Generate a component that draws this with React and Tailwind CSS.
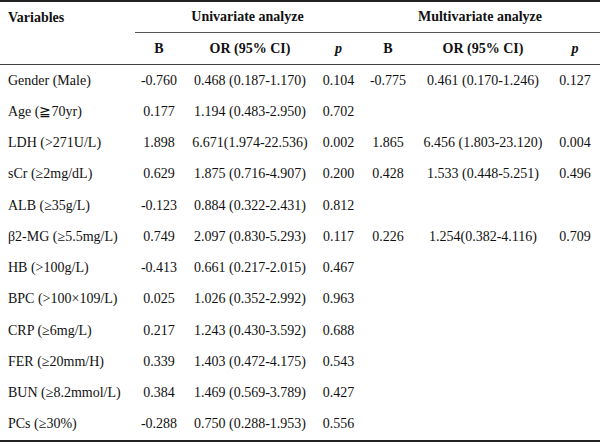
const rows = [
  ['Gender (Male)', '-0.760', '0.468 (0.187-1.170)', '0.104', '-0.775', '0.461 (0.170-1.246)', '0.127'],
  ['Age (\u226770yr)', '0.177', '1.194 (0.483-2.950)', '0.702', '', '', ''],
  ['LDH (>271U/L)', '1.898', '6.671(1.974-22.536)', '0.002', '1.865', '6.456 (1.803-23.120)', '0.004'],
  ['sCr (\u22652mg/dL)', '0.629', '1.875 (0.716-4.907)', '0.200', '0.428', '1.533 (0.448-5.251)', '0.496'],
  ['ALB (\u226535g/L)', '-0.123', '0.884 (0.322-2.431)', '0.812', '', '', ''],
  ['\u03b22-MG (\u22655.5mg/L)', '0.749', '2.097 (0.830-5.293)', '0.117', '0.226', '1.254(0.382-4.116)', '0.709'],
  ['HB (>100g/L)', '-0.413', '0.661 (0.217-2.015)', '0.467', '', '', ''],
  ['BPC (>100\u00d7109/L)', '0.025', '1.026 (0.352-2.992)', '0.963', '', '', ''],
  ['CRP (\u22656mg/L)', '0.217', '1.243 (0.430-3.592)', '0.688', '', '', ''],
  ['FER (\u226520mm/H)', '0.339', '1.403 (0.472-4.175)', '0.543', '', '', ''],
  ['BUN (\u22658.2mmol/L)', '0.384', '1.469 (0.569-3.789)', '0.427', '', '', ''],
  ['PCs (\u226530%)', '-0.288', '0.750 (0.288-1.953)', '0.556', '', '', ''],
];

const cols = 'grid grid-cols-[135px_48px_134px_43px_56px_134px_50px]';

export default function App() {
  return (
    <div className="h-[442px] w-[600px] bg-white font-['Liberation_Serif',serif] text-[14px] leading-none text-[#111]">
      <div className="border-t-2 border-[#222]">
        <div className={`${cols} h-[31px]`}>
          <div className="flex items-center pl-2 font-bold">Variables</div>
          <div className="col-span-3 flex items-center justify-center border-b border-[#555] font-bold">
            Univariate analyze
          </div>
          <div className="col-span-3 flex items-center justify-center border-b border-[#555] font-bold">
            Multivariate analyze
          </div>
        </div>
        <div className={`${cols} h-[32px] border-b border-[#444] font-bold`}>
          <div />
          <div className="flex items-center justify-center">B</div>
          <div className="flex items-center justify-center">OR (95% CI)</div>
          <div className="flex items-center justify-center italic">p</div>
          <div className="flex items-center justify-center">B</div>
          <div className="flex items-center justify-center">OR (95% CI)</div>
          <div className="flex items-center justify-center italic">p</div>
        </div>
        <div className="border-b-2 border-[#222]">
          {rows.map((r) => (
            <div key={r[0]} className={`${cols} h-[31.25px]`}>
              <div className="flex items-center whitespace-nowrap pl-2">{r[0]}</div>
              {r.slice(1).map((c, i) => (
                <div key={i} className="flex items-center justify-center whitespace-nowrap">
                  {c}
                </div>
              ))}
            </div>
          ))}
        </div>
      </div>
    </div>
  );
}
